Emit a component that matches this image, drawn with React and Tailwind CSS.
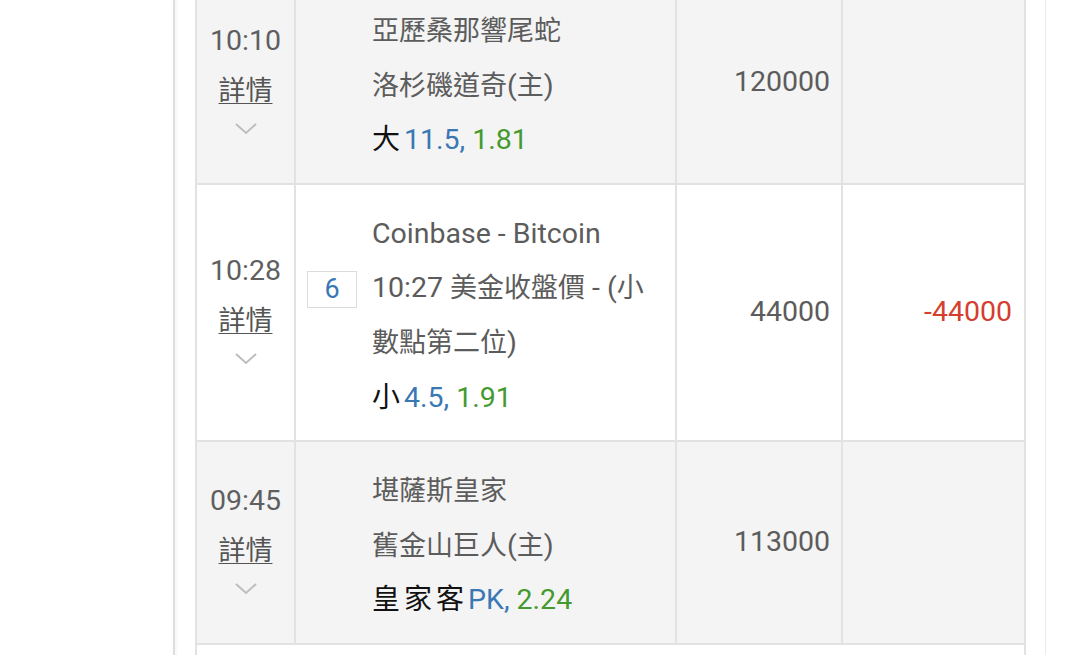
import React from 'react';

const rows = [
  {
    time: '10:10',
    bg: 'bg-[#f4f4f4]',
    lines: ['亞歷桑那響尾蛇', '洛杉磯道奇(主)'],
    pick: '大',
    line: '11.5,',
    odds: '1.81',
    amount: '120000',
    result: '',
  },
  {
    time: '10:28',
    bg: 'bg-white',
    badge: '6',
    lines: ['Coinbase - Bitcoin', '10:27 美金收盤價 - (小', '數點第二位)'],
    pick: '小',
    line: '4.5,',
    odds: '1.91',
    amount: '44000',
    result: '-44000',
  },
  {
    time: '09:45',
    bg: 'bg-[#f4f4f4]',
    lines: ['堪薩斯皇家', '舊金山巨人(主)'],
    pick: '皇家客',
    line: 'PK,',
    odds: '2.24',
    amount: '113000',
    result: '',
  },
];

// CJK glyphs render a touch smaller than the latin ones in the screenshot
function Mixed({ text }) {
  const parts = text.split(/([\u3400-\u9fff]+)/).filter(Boolean);
  return parts.map((p, i) =>
    /[\u3400-\u9fff]/.test(p) ? (
      <span key={i} className="text-[27px]">{p}</span>
    ) : (
      <span key={i}>{p}</span>
    )
  );
}

function Chevron() {
  return (
    <svg className="mx-auto mt-[6px] mb-[18px] block" width="24" height="13" viewBox="0 0 24 13" fill="none">
      <polyline points="2,2 12,11 22,2" stroke="#bdbdbd" strokeWidth="2" />
    </svg>
  );
}

function BetRow({ row }) {
  return (
    <div className={`flex border-b-2 border-[#e2e2e2] ${row.bg}`}>
      <div className="w-[99px] shrink-0 border-r-2 border-[#e2e2e2] flex flex-col justify-center pt-[4px] text-center">
        <div className="leading-[50px] text-[#5f5f5f]">{row.time}</div>
        <div className="leading-[50px] text-[27px] text-[#555] underline underline-offset-[3px] decoration-1">詳情</div>
        <Chevron />
      </div>
      <div className="w-[381px] shrink-0 border-r-2 border-[#e2e2e2] flex pt-[22px] pb-[15px] pl-[11px] pr-[16px]">
        <div className="w-[50px] shrink-0">
          {row.badge && (
            <div className="mt-[64px] h-[37px] w-[50px] border border-[#dcdcdc] bg-white text-center leading-[35px] text-[27px] text-[#3a78b4]">
              {row.badge}
            </div>
          )}
        </div>
        <div className="ml-[15px] leading-[54.6px] text-[#5c5c5c] whitespace-nowrap">
          {row.lines.map(l => (
            <div key={l}>
              <Mixed text={l} />
            </div>
          ))}
          <div>
            <span className="text-[#111] text-[28px] tracking-[4px]">{row.pick}</span>
            <span className="text-[#3a78b4]">{row.line} </span>
            <span className="text-[#449a2e]">{row.odds}</span>
          </div>
        </div>
      </div>
      <div className="w-[166px] shrink-0 border-r-2 border-[#e2e2e2] flex items-center justify-end pr-[11px] text-[#5c5c5c]">
        {row.amount}
      </div>
      <div className="flex-1 flex items-center justify-end pr-[12px] text-[#d43f2f]">{row.result}</div>
    </div>
  );
}

export default function App() {
  return (
    <div
      className="h-[655px] w-[1080px] overflow-hidden bg-white flex text-[28.5px]"
      style={{ fontFamily: 'Roboto, "Noto Sans CJK TC", sans-serif' }}
    >
      <div className="w-[173px] shrink-0" />
      <div className="w-[873px] shrink-0 border-l-2 border-r border-l-[#dedede] border-r-[#ececec] pl-[20px] pr-[19px] shadow-[inset_4px_0_4px_-3px_rgba(0,0,0,0.06)]">
        <div className="-mt-[20px] w-[831px] border-x-2 border-t-2 border-[#e2e2e2]">
          {rows.map(r => (
            <BetRow key={r.time} row={r} />
          ))}
          <div className="h-[60px] bg-white" />
        </div>
      </div>
    </div>
  );
}
